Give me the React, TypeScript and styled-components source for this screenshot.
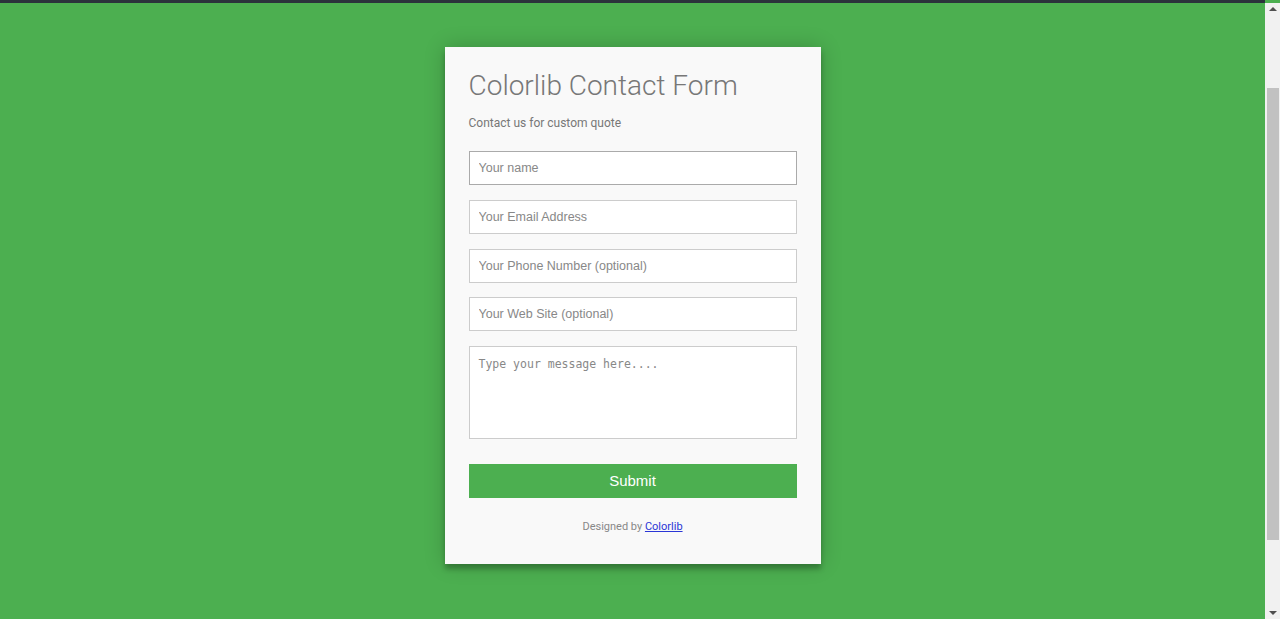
import styled, { createGlobalStyle } from "styled-components";

const GlobalStyle = createGlobalStyle`
  html, body {
    height: 100%;
  }
  body {
    margin: 0;
    padding-right: 15px;
    overflow: hidden;
    background: #4CAF50;
    font-family: Roboto, "Liberation Sans", sans-serif;
  }
`;

const TopBar = styled.header`
  height: 3px;
  background: #2b333b;
`;

const Section = styled.section`
  padding: 44px 0 56px;
`;

const Card = styled.div`
  width: 376px;
  box-sizing: border-box;
  margin: 0 auto;
  background: #f9f9f9;
  padding: 21px 24px 29px;
  box-shadow: 0 0 20px rgba(0, 0, 0, 0.2), 0 5px 5px rgba(0, 0, 0, 0.24);
`;

const Title = styled.h3`
  margin: 0;
  font-size: 28px;
  line-height: 36px;
  font-weight: 300;
  color: #777;
`;

const Subtitle = styled.h4`
  margin: 11px 0 20px;
  font-size: 12px;
  line-height: 16px;
  font-weight: 400;
  color: #777;
`;

const Form = styled.form`
  display: flex;
  flex-direction: column;
  gap: 14.75px;
`;

const Field = styled.input<{ $hover?: boolean }>`
  box-sizing: border-box;
  width: 100%;
  height: 34px;
  margin: 0;
  padding: 0 9px;
  border: 1px solid ${(p) => (p.$hover ? "#aaa" : "#ccc")};
  background: #fff;
  font-family: "Liberation Sans", Arial, sans-serif;
  font-size: 12.5px;
  color: #555;
  outline: none;

  &::placeholder {
    color: #888;
  }
`;

const Message = styled.textarea`
  box-sizing: border-box;
  width: 100%;
  height: 93px;
  margin: 0;
  padding: 10px 9px;
  border: 1px solid #ccc;
  background: #fff;
  font-family: "DejaVu Sans Mono", monospace;
  font-size: 11.5px;
  resize: none;
  outline: none;

  &::placeholder {
    color: #888;
  }
`;

const SubmitButton = styled.button`
  margin-top: 10px;
  height: 34px;
  border: 0;
  background: #4caf50;
  color: #fff;
  font-family: "Liberation Sans", Arial, sans-serif;
  font-size: 15px;
  cursor: pointer;
`;

const Credit = styled.p`
  margin: 21px 0 0;
  text-align: center;
  font-size: 11px;
  line-height: 16px;
  color: #888;

  a {
    color: #2a36d6;
  }
`;

/* the browser's scrollbar, drawn over the right edge */
const Scrollbar = styled.div`
  position: fixed;
  top: 3px;
  right: 0;
  bottom: 0;
  width: 15px;
  display: flex;
  flex-direction: column;
  background: #f1f1f1;
`;

const ArrowButton = styled.div<{ $down?: boolean }>`
  height: 12px;
  display: flex;
  align-items: center;
  justify-content: center;

  &::before {
    content: "";
    border-left: 4px solid transparent;
    border-right: 4px solid transparent;
    ${(p) =>
      p.$down ? "border-top: 4px solid #505050;" : "border-bottom: 4px solid #505050;"}
  }
`;

const Track = styled.div<{ $offset: number }>`
  flex: 1;
  padding-top: ${(p) => p.$offset}px;
`;

const Thumb = styled.div<{ $size: number }>`
  height: ${(p) => p.$size}px;
  margin: 0 1px 0 2px;
  background: #c1c1c1;
`;

export default function App() {
  return (
    <>
      <GlobalStyle />
      <TopBar />
      <Section>
        <Card>
          <Title>Colorlib Contact Form</Title>
          <Subtitle>Contact us for custom quote</Subtitle>
          <Form onSubmit={(e) => e.preventDefault()}>
            <Field $hover type="text" placeholder="Your name" />
            <Field type="email" placeholder="Your Email Address" />
            <Field type="tel" placeholder="Your Phone Number (optional)" />
            <Field type="url" placeholder="Your Web Site (optional)" />
            <Message placeholder="Type your message here...." />
            <SubmitButton type="submit">Submit</SubmitButton>
          </Form>
          <Credit>
            Designed by <a href="#">Colorlib</a>
          </Credit>
        </Card>
      </Section>
      <Scrollbar>
        <ArrowButton />
        <Track $offset={73}>
          <Thumb $size={452} />
        </Track>
        <ArrowButton $down />
      </Scrollbar>
    </>
  );
}
